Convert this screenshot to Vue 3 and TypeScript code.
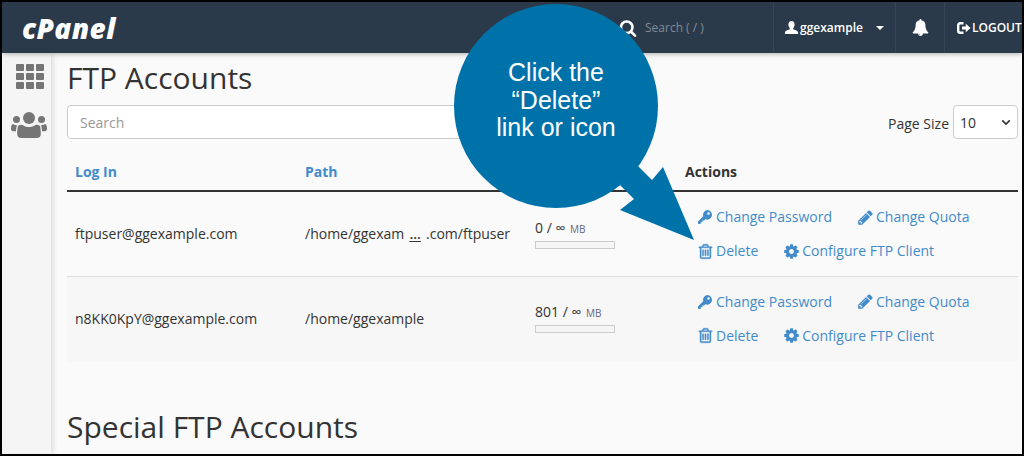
<script setup lang="ts">
const icons = {
  search: 'M1216 832q0-185-131.5-316.5t-316.5-131.5-316.5 131.5-131.5 316.5 131.5 316.5 316.5 131.5 316.5-131.5 131.5-316.5zm512 832q0 52-38 90t-90 38q-54 0-90-38l-343-342q-179 124-399 124-143 0-273.5-55.5t-225-150-150-225-55.5-273.5 55.5-273.5 150-225 225-150 273.5-55.5 273.5 55.5 225 150 150 225 55.5 273.5q0 220-124 399l343 343q37 37 37 90z',
  bell: 'M912 1696q0-16-16-16-59 0-101.5-42.5t-42.5-101.5q0-16-16-16t-16 16q0 73 51.5 124.5t124.5 51.5q16 0 16-16zm816-288q0 52-38 90t-90 38h-448q0 106-75 181t-181 75-181-75-75-181h-448q-52 0-90-38t-38-90q50-42 91-88t85-119.5 74.5-158.5 50-206 19.5-260q0-152 117-282.5t307-158.5q-8-19-8-39 0-40 28-68t68-28 68 28 28 68q0 20-8 39 190 28 307 158.5t117 282.5q0 139 19.5 260t50 206 74.5 158.5 85 119.5 91 88z',
  pencil: 'M491 1536l91-91-235-235-91 91v107h128v128h107zm523-928q0-22-22-22-10 0-17 7l-542 542q-7 7-7 17 0 22 22 22 10 0 17-7l542-542q7-7 7-17zm-54-192l416 416-832 832h-416v-416zm683 96q0 53-37 90l-166 166-416-416 166-165q36-38 90-38 53 0 91 38l235 234q37 39 37 91z',
  trash: 'M704 736v576q0 14-9 23t-23 9h-64q-14 0-23-9t-9-23v-576q0-14 9-23t23-9h64q14 0 23 9t9 23zm256 0v576q0 14-9 23t-23 9h-64q-14 0-23-9t-9-23v-576q0-14 9-23t23-9h64q14 0 23 9t9 23zm256 0v576q0 14-9 23t-23 9h-64q-14 0-23-9t-9-23v-576q0-14 9-23t23-9h64q14 0 23 9t9 23zm128 724v-948h-896v948q0 22 7 40.5t14.5 27 10.5 8.5h832q3 0 10.5-8.5t14.5-27 7-40.5zm-672-1076h448l-48-117q-7-9-17-11h-317q-10 2-17 11zm928 32v64q0 14-9 23t-23 9h-96v948q0 83-47 143.5t-113 60.5h-832q-66 0-113-58.5t-47-141.5v-952h-96q-14 0-23-9t-9-23v-64q0-14 9-23t23-9h309l70-167q15-37 54-63t79-26h320q40 0 79 26t54 63l70 167h309q14 0 23 9t9 23z',
  cog: 'M1152 896q0-106-75-181t-181-75-181 75-75 181 75 181 181 75 181-75 75-181zm512-109v222q0 12-8 23t-20 13l-185 28q-19 54-39 91 35 50 107 138 10 12 10 25t-9 23q-27 37-99 108t-94 71q-12 0-26-9l-138-108q-44 23-91 38-16 136-29 186-7 28-36 28h-222q-14 0-24.5-8.5t-11.5-21.5l-28-184q-49-16-90-37l-141 107q-10 9-25 9-14 0-25-11-126-114-165-168-7-10-7-23 0-12 8-23 15-21 51-66.5t54-70.5q-27-50-41-99l-183-27q-13-2-21-12.5t-8-23.5v-222q0-12 8-23t19-13l186-28q14-46 39-92-40-57-107-138-10-12-10-24 0-10 9-23 26-36 98.5-107.5t94.5-71.5q13 0 26 10l138 107q44-23 91-38 16-136 29-186 7-28 36-28h222q14 0 24.5 8.5t11.5 21.5l28 184q49 16 90 37l142-107q9-9 24-9 13 0 25 10 129 119 165 170 7 8 7 22 0 12-8 23-15 21-51 66.5t-54 70.5q26 50 41 98l183 28q13 2 21 12.5t8 23.5z',
}

interface Account {
  login: string
  path: string
  truncated: boolean
  used: string
}

const accounts: Account[] = [
  { login: 'ftpuser@ggexample.com', path: '', truncated: true, used: '0' },
  { login: 'n8KK0KpY@ggexample.com', path: '/home/ggexample', truncated: false, used: '801' },
]
</script>

<template>
  <div class="frame">
    <header class="topbar">
      <div class="logo">cPanel</div>
      <div class="top-search">
        <svg class="ic-search" viewBox="0 0 1792 1792"><path :d="icons.search" /></svg>
        <span>Search ( / )</span>
      </div>
      <div class="top-user">
        <svg class="ic-user" viewBox="0 0 16 16">
          <path d="M8 1c2.200 0 3.300 1.700 3.300 3.800 0 1.600-.6 3-1.500 3.800v1.200c1.500.8 5.200 1.400 5.200 3.700V15H1v-1.500c0-2.300 3.700-2.900 5.200-3.700V8.600C5.300 7.800 4.700 6.400 4.700 4.800 4.700 2.700 5.800 1 8 1z" />
        </svg>
        <span>ggexample</span>
        <i class="caret"></i>
      </div>
      <div class="top-bell">
        <svg class="ic-bell" viewBox="0 0 1792 1792"><path :d="icons.bell" /></svg>
      </div>
      <div class="top-logout">
        <svg class="ic-out" viewBox="0 0 14 12">
          <path class="out-arc" d="M6.500 1.300H3.200A2 2 0 0 0 1.200 3.300v5.400a2 2 0 0 0 2 2h3.300" />
          <path d="M5 4.600h3.800V1.800L13.500 6 8.800 10.200V7.400H5z" />
        </svg>
        <span>LOGOUT</span>
      </div>
    </header>

    <div class="body">
      <aside class="side">
        <div class="grid-ic"><i v-for="n in 9" :key="n"></i></div>
        <svg class="ic-users" viewBox="0 0 36 26">
          <circle cx="18" cy="6" r="6" />
          <circle cx="5.500" cy="7.500" r="3.500" />
          <circle cx="30.500" cy="7.500" r="3.500" />
          <path d="M7 14c2-1.500 4-1.500 5.500-.5 1.700 1 3.700 1.500 5.500 1.500s3.800-.5 5.500-1.500c1.500-1 3.500-1 5.500.5 .6 2 .8 5 .8 8 0 2.500-1.500 4-4 4H10.200c-2.500 0-4-1.500-4-4 0-3 .2-6 .8-8z" />
          <path d="M0 16.500c0-3 1-4.500 2-4.500 1 .8 2.200 1.200 4 1.200-.6 1.700-1 4-1 6H2c-1.200 0-2-1-2-2.700z" />
          <path d="M36 16.500c0-3-1-4.500-2-4.500-1 .8-2.200 1.200-4 1.200 .6 1.700 1 4 1 6h3c1.200 0 2-1 2-2.700z" />
        </svg>
      </aside>

      <main class="main">
        <h1 class="title">FTP Accounts</h1>
        <div class="controls">
          <div class="search-box">Search</div>
          <div class="page-size">
            <span class="ps-label">Page Size</span>
            <div class="select">
              <span>10</span>
              <svg viewBox="0 0 12 8"><path d="M1.500 1.500 6 6l4.500-4.500" /></svg>
            </div>
          </div>
        </div>

        <table class="tbl">
          <colgroup>
            <col class="c1" /><col class="c2" /><col class="c3" /><col />
          </colgroup>
          <thead>
            <tr>
              <th class="link-th">Log In</th>
              <th class="link-th">Path</th>
              <th></th>
              <th>Actions</th>
            </tr>
          </thead>
          <tbody>
            <tr v-for="a in accounts" :key="a.login">
              <td>{{ a.login }}</td>
              <td>
                <template v-if="a.truncated">/home/ggexam <u class="dots">...</u> .com/ftpuser</template>
                <template v-else>{{ a.path }}</template>
              </td>
              <td>
                <div class="quota">{{ a.used }} / <span class="inf">∞</span> <small>MB</small></div>
                <div class="bar"></div>
              </td>
              <td>
                <div class="acts">
                  <div class="act-row">
                    <a class="act">
                      <svg class="ic-key" viewBox="0 0 16 16">
                        <path fill-rule="evenodd" d="M10.500 0a5.500 5.500 0 1 1-2.100 10.600L7 12H5v2H3v2H0.700L0 15.300V13l6-6A5.500 5.500 0 0 1 10.500 0zM12 2.500a1.500 1.500 0 1 0 0 3 1.500 1.500 0 0 0 0-3z" />
                      </svg>
                      Change Password
                    </a>
                    <a class="act"><svg class="ic-lg" viewBox="0 0 1792 1792"><path :d="icons.pencil" /></svg>Change Quota</a>
                  </div>
                  <div class="act-row">
                    <a class="act a-del"><svg viewBox="0 0 1792 1792"><path :d="icons.trash" /></svg>Delete</a>
                    <a class="act"><svg class="ic-lg" viewBox="0 0 1792 1792"><path :d="icons.cog" /></svg>Configure FTP Client</a>
                  </div>
                </div>
              </td>
            </tr>
          </tbody>
        </table>

        <h1 class="title title-2">Special FTP Accounts</h1>
      </main>
    </div>

    <svg class="pointer" viewBox="0 0 100 100">
      <polygon points="18,0 32,14 43,1 74,74 0,44 14,33 0,19" />
    </svg>
    <div class="bubble">Click the<br />“Delete”<br />link or icon</div>
  </div>
</template>

<style>
html, body { margin: 0; padding: 0; background: #000; }
</style>

<style scoped>
.frame {
  position: relative;
  box-sizing: border-box;
  width: 1024px;
  height: 456px;
  border: 2px solid #000;
  overflow: hidden;
  background: #fafafa;
  font-family: "Open Sans", sans-serif;
  color: #333;
  display: flex;
  flex-direction: column;
}
.topbar {
  flex: none;
  height: 51px;
  background: #2b3a4a;
  display: flex;
  align-items: stretch;
  color: #fff;
  box-shadow: 0 1px 5px rgba(0, 0, 0, 0.3);
  position: relative;
  z-index: 1;
}
.logo {
  margin-left: 20px;
  align-self: center;
  font: italic 800 28px/1 "Open Sans", sans-serif;
  letter-spacing: 0.4px;
  color: #fff;
}
.top-search {
  margin-left: auto;
  width: 154px;
  display: flex;
  align-items: center;
  font-size: 12px;
  color: #7f8a95;
}
.ic-search { width: 18px; height: 18px; fill: #fff; margin-right: 8px; }
.top-user {
  box-sizing: border-box;
  width: 122px;
  border-left: 1px solid #354555;
  display: flex;
  align-items: center;
  padding-left: 10px;
  font-size: 12px;
  font-weight: 600;
}
.ic-user { width: 15px; height: 15px; fill: #fff; margin-right: 1px; }
.caret {
  margin-left: 13px;
  border-top: 4px solid #fff;
  border-left: 4px solid transparent;
  border-right: 4px solid transparent;
}
.top-bell {
  box-sizing: border-box;
  width: 49px;
  border-left: 1px solid #354555;
  display: flex;
  align-items: center;
  justify-content: center;
}
.ic-bell { width: 17px; height: 17px; fill: #fff; }
.top-logout {
  box-sizing: border-box;
  width: 78px;
  border-left: 1px solid #354555;
  display: flex;
  align-items: center;
  padding-left: 12px;
  font-size: 12px;
  font-weight: 600;
  white-space: nowrap;
}
.ic-out { width: 14px; height: 12px; fill: #fff; margin-right: 1px; flex: none; }
.out-arc { fill: none; stroke: #fff; stroke-width: 2.400; }
.body { flex: 1; display: flex; min-height: 0; }
.side {
  flex: none;
  width: 49px;
  background: #f5f5f5;
  box-shadow: 1px 0 6px rgba(0, 0, 0, 0.16);
  display: flex;
  flex-direction: column;
  align-items: center;
  padding-top: 11px;
  box-sizing: border-box;
}
.grid-ic {
  display: grid;
  grid-template-columns: repeat(3, 8px);
  grid-auto-rows: 7px;
  gap: 2px;
  margin-left: 6px;
}
.grid-ic i { background: #757575; border-radius: 1px; }
.ic-users { width: 36px; height: 26px; fill: #757575; margin-top: 23px; margin-left: 5px; }
.main { flex: 1; padding: 0 4px 0 16px; min-width: 0; }
.title {
  margin: 0;
  font-size: 30px;
  font-weight: 400;
  line-height: 38px;
  padding-top: 6px;
  color: #333;
}
.controls {
  margin-top: 8px;
  display: flex;
  justify-content: space-between;
  align-items: center;
  height: 34px;
}
.search-box {
  box-sizing: border-box;
  width: 500px;
  height: 34px;
  padding: 1px 12px 0;
  line-height: 32px;
  font-size: 14px;
  color: #999;
  background: #fff;
  border: 1px solid #ccc;
  border-radius: 4px;
}
.page-size { display: flex; align-items: center; gap: 4px; font-size: 14px; }
.ps-label { padding-top: 2px; }
.select {
  box-sizing: border-box;
  width: 65px;
  height: 34px;
  padding: 0 6px;
  display: flex;
  align-items: center;
  justify-content: space-between;
  background: #fff;
  border: 1px solid #ccc;
  border-radius: 4px;
}
.select svg { width: 10px; height: 7px; fill: none; stroke: #333; stroke-width: 2; }
.tbl {
  margin-top: 17px;
  width: 951px;
  border-collapse: collapse;
  table-layout: fixed;
  font-size: 14px;
}
.c1 { width: 230px; }
.c2 { width: 230px; }
.c3 { width: 150px; }
.tbl th {
  height: 32px;
  padding: 0 8px 2px;
  text-align: left;
  font-weight: 700;
  line-height: 20px;
  border-bottom: 2px solid #333;
  box-sizing: content-box;
}
.link-th { color: #428bca; }
.tbl td {
  height: 84px;
  padding: 0 8px;
  border-bottom: 1px solid #ddd;
  vertical-align: middle;
  white-space: nowrap;
  line-height: 20px;
}
.tbl tbody tr:nth-child(2) td {
  border-bottom: 0;
  background: #f7f7f7;
  height: 83px;
  padding-bottom: 2px;
}
.dots { margin: 0 1.500px; font-weight: 600; text-underline-offset: 2px; }
.quota { line-height: 20px; margin-top: -2px; }
.inf { font-size: 14px; }
.quota small { font-size: 10px; color: #667; margin-left: 1px; }
.bar {
  box-sizing: border-box;
  width: 80px;
  height: 8px;
  margin-top: 2px;
  background: #f5f5f5;
  border: 1px solid #ccc;
}
.acts { display: flex; flex-direction: column; gap: 14px; padding-left: 5px; margin-left: 8px; }
.act-row { display: flex; line-height: 20px; }
.act {
  display: inline-flex;
  align-items: center;
  color: #428bca;
  margin-right: 26px;
}
.act svg { width: 15px; height: 15px; fill: #428bca; margin-right: 3px; flex: none; }
.act .ic-key { width: 14px; height: 14px; margin-right: 4px; }
.act .ic-lg { width: 17px; height: 17px; margin-left: -1px; margin-right: 2px; }
.a-del svg {
  width: 17px;
  height: 17px;
  margin-left: -1px;
  margin-right: 2px;
  stroke: #428bca;
  stroke-width: 40;
}
.title-2 { padding-top: 0; margin-top: 46px; }
.bubble {
  position: absolute;
  left: 452px;
  top: 2px;
  width: 204px;
  height: 204px;
  box-sizing: border-box;
  padding-top: 55px;
  border-radius: 50%;
  background: #0072aa;
  color: #fff;
  text-align: center;
  font: 25px/27.500px "Liberation Sans", Arial, sans-serif;
  z-index: 2;
}
.pointer {
  position: absolute;
  left: 618px;
  top: 164px;
  width: 100px;
  height: 100px;
  fill: #0072aa;
  z-index: 2;
}
</style>
